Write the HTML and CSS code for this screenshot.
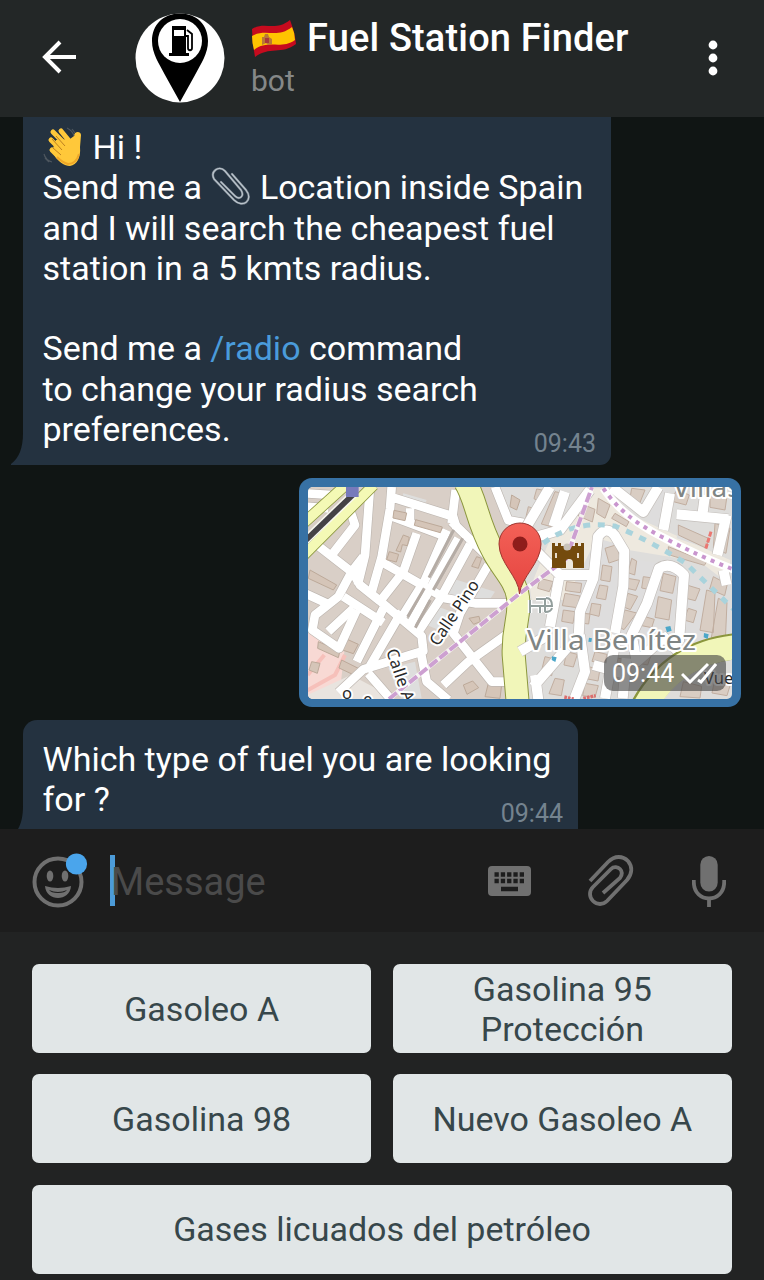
FILE: index.html
```html
<!DOCTYPE html>
<html lang="en">
<head>
<meta charset="utf-8">
<title>Fuel Station Finder</title>
<link rel="stylesheet" href="styles.css">
</head>
<body>
<div class="app">
  <header class="header">
    <svg class="back" viewBox="0 0 36 34" role="img" aria-label="Back"><path d="M34 17H4M18 2 3 17l15 15" fill="none" stroke="#fff" stroke-width="4"/></svg>
    <svg class="avatar" viewBox="0 0 90 90" role="img" aria-label="Fuel Station Finder avatar">
      <circle cx="45" cy="45" r="44.5" fill="#fff"/>
      <path d="M45 .5C28 .5 17 12 17 28c0 13 7 22 13 34l15 27 15-27c6-12 13-21 13-34C73 12 62 .5 45 .5Z" fill="#000"/>
      <circle cx="45" cy="28" r="22" fill="#fff"/>
      <path d="M37 13h14v27h3v3H34v-3h3Z" fill="#000"/>
      <path d="M39 17h10v6H39Z" fill="#fff"/>
      <path d="m52 17 5 4v14c0 3-4 3-4 0V23h-2" fill="none" stroke="#000" stroke-width="1.8"/>
    </svg>
    <div class="heading">
      <h1 class="title">
        <svg class="flag" viewBox="0 0 46 40" role="img" aria-label="Flag of Spain">
          <path d="M1 10C14 2 24 13 39 1q5 13 6 24C31 36 18 27 4 38Q1 24 1 10Z" fill="#c60b1e"/>
          <path d="M1 17C15 9 26 20 41 8q3 6 3 13C30 31 17 20 3 31Q1 24 1 17Z" fill="#ffc400"/>
          <path d="M11 18h2l1-3 3 0 1 3 3 2v5l-4 1-2-2-4 2Z" fill="#b97a35"/>
          <path d="M14 19h4v5h-4Z" fill="#a9393c"/>
        </svg>
        <span class="title-text">Fuel Station Finder</span>
      </h1>
      <p class="subtitle">bot</p>
    </div>
    <svg class="menu" viewBox="0 0 10 36" role="img" aria-label="Menu"><g fill="#fff"><circle cx="5" cy="5" r="4.400"/><circle cx="5" cy="18" r="4.400"/><circle cx="5" cy="31" r="4.400"/></g></svg>
  </header>

  <main class="chat">
    <section class="bubble intro">
      <svg class="tail" viewBox="0 0 13 32" aria-hidden="true"><path d="M13 0h-1C12 15 8 25 0 31v1h13Z" fill="#243240"/></svg>
      <p class="line"><svg class="emoji" viewBox="0 0 40 40" role="img" aria-label="Waving hand">
        <path d="M13 13 27 12l4-3c0-5 7-5 7-1l-1 12c1 10-3 18-10 19-6 0-10-4-14-8L9 24Z" fill="#ffc83a"/>
        <path d="m18 4 9 11M10 5l14 14M8 13l12 12M9 23l10 10" fill="none" stroke="#ffc83a" stroke-width="5" stroke-linecap="round"/>
        <path d="m13 9 9 10M9 12l10 11M10 21l8 7" fill="none" stroke="#bd8020" stroke-width="1"/>
        <path d="M36 27c-2 7-6 10-11 10-4-1-8-4-11-7" fill="none" stroke="#efa728" stroke-width="2"/>
        <path d="M1 27c1 4 4 7 8 8M2 31l4 4M24 1c4 2 6 4 7 8M29 2l3 4" fill="none" stroke="#4d565e" stroke-width="1.200"/>
      </svg><span>Hi !</span></p>
      <p class="line"><span>Send me a</span><svg class="emoji clip" viewBox="0 0 40 40" role="img" aria-label="Paperclip">
        <path d="m21 7 14 16c8 10-3 19-12 10L3 12C-1 4 8-2 14 4l16 19c4 7-2 10-6 6L10 15" fill="none" stroke="#77818b" stroke-width="2.300" stroke-linecap="round"/>
        <path d="m21 7 14 16c8 10-3 19-12 10L3 12C-1 4 8-2 14 4l16 19c4 7-2 10-6 6L10 15" fill="none" stroke="#bac4cc" stroke-width="1.200" stroke-linecap="round"/>
      </svg><span>Location inside Spain</span></p>
      <p class="line">and I will search the cheapest fuel</p>
      <p class="line">station in a 5 kmts radius.</p>
      <p class="line gap">Send me a <a class="command">/radio</a> command</p>
      <p class="line">to change your radius search</p>
      <p class="line">preferences.</p>
      <time class="time">09:43</time>
    </section>

    <section class="location">
      <svg class="map" viewBox="0 0 424 212" role="img" aria-label="Map of Villa Benítez">
        <defs>
          <linearGradient id="pin" x2="0" y2="1"><stop stop-color="#f36157"/><stop offset="1" stop-color="#e54440"/></linearGradient>
          <g id="west">
            <path d="m30 55 80 5M35 95l65 5M165 105l15 45-70 90M225 36l-15 205-22 90M60 205l105 82M205 245l-35 45-40 75-70 55-8 45 80 55 53-115M30 355l65 30"/>
            <path d="m290 36-5 65-25 145-30 105M285 65l185 58M285 122l155 58M482 45l-12 100M345 100v50M470 140l160 155 20 35M365 175l-40 115-75 95M250 255l200 115 90 15h110"/>
            <path d="m175 295 20 35 60 48 125 105 5 45-180 55-75 70M145 365l120 78M175 400l-75 70M265 400l-80 160M320 410l-105 180M455 165l-65 150-75 120M490 190 345 450M525 208l-90 165-70 105M580 270l-85 145-20 60 115 145h60M640 475l-120 85-75 70M375 520l20 100 65 55M220 595l65 75M600 36l40 100 60 10M470 110l15 50"/>
          </g>
          <g id="east">
            <path d="m190 500 5-90 40-100 14-125q25-35 50-4l29 48-3 105-25 140M340 500l56-115 36-105q35-23 75 20l-15 200"/>
            <path d="M20 180 105 36M65 185l70-20 90-120M150 50l-35 105M60 225l75 75h105M132 310l-27 145M290 36l95 75 45-75M465 55l-20 110M485 118l155 15M570 60l-8 60M635 120l-28 120M625 285l10 45M195 480l15 110-35 90M155 520 55 635M100 480l-85 50M60 600l10 75M305 480l-35 190M350 480l15 80 80-70M440 480l60 60M335 550l-12 120M235 570l90 25"/>
          </g>
        </defs>
        <rect width="424" height="212" fill="#dedddb"/>
        <g transform="translate(-13 -12) scale(.33333)" stroke-linejoin="round">
          <path d="M38 36h550l100 250v390H38Z" fill="#d9cfc7"/>
          <path d="m38 440 20 45 90 45-10 90-50 55H38Z" fill="#f8d9d4"/>
          <path d="m30 650 90-50 30-60M38 600l50-60" fill="none" stroke="#f6c0ba" stroke-width="12"/>
          <path d="m38 660 130-60 130 70v12H38Z" fill="#e9e4df"/>
          <path d="m325 55 70 20-10 25-70-20ZM415 390l55 20-25 60-50-20ZM470 310l130 40-20 30-120-10ZM280 580l80-20 20 110h-60Z" fill="#dededd"/>
          <g fill="#d5c5b8" stroke="#bca999" stroke-width="3">
            <path d="M70 500l65 28-5 20-62-28ZM50 560l25 5-8 30-25-10ZM150 490l40 18-15 28-36-12ZM140 555l60 30-8 22-60-28ZM580 625l40 5-5 40-45-5ZM505 630l28-12 18 20-35 20ZM45 285l80 45-10 15-75-35Z"/>
          </g>
          <use href="#west" fill="none" stroke="#beb7b1" stroke-width="30"/>
          <use href="#west" fill="none" stroke="#fff" stroke-width="26"/>
          <g fill="none" stroke="#b5aca5" stroke-width="9"><path d="M476 165 402 308M503 190 415 345M388 340l-50 85M406 375l-45 83"/></g>
          <g fill="#d5c5b8" stroke="#bca999" stroke-width="3">
            <path d="m297 106 38 8-5 23-36-8ZM362 134l80 22-6 17-78-22ZM325 180l18 7-6 25-15-3-5 22-14-4ZM283 230l28 8-7 23-29-7ZM545 245l15 5-10 30-20-6ZM522 430l30-6 4 16-20 8ZM650 60l25 15-10 30-20-10Z"/>
          </g>
          <path d="M25 145 150 32M25 242 236 30" stroke="#8c9740" stroke-width="34"/>
          <path d="M25 145 150 32M25 242 236 30" stroke="#f4f9b5" stroke-width="29"/>
          <path d="M30 198 183 50" stroke="#f8f8f0" stroke-width="26"/>
          <path d="M30 198 183 50" stroke="#444246" stroke-width="17"/>
          <path d="M153 30h38v36h-38Z" fill="#777abb"/>
          <path d="M510 20c35 55 35 120 85 210 25 50 67 85 74 137 8 65-16 82-13 173l13 155" fill="none" stroke="#8b963d" stroke-width="72"/>
          <path d="M510 20c35 55 35 120 85 210 25 50 67 85 74 137 8 65-16 82-13 173l13 155" fill="none" stroke="#f1f6b9" stroke-width="66"/>
        </g>
        <g transform="translate(207 -12) scale(.33333)" stroke-linejoin="round">
          <path d="m45 340 40-100 40-90 100-110h45l90 85 285 130v75l-90-70-215-35-10 75-15 75H50Z" fill="#eee9df"/>
          <path d="m245 190 75 20 20 40 90 15 140 45 80 70v135l-300 20H95l55-155Z" fill="#dedddd"/>
          <path d="m395 140 40-100h30l-20 120ZM490 150l90 30-5 40-90-30Z" fill="#dedddd"/>
          <g fill="#d9cdc3" stroke="#c1aea0" stroke-width="3">
            <path d="m65 42 28 5-16 34-20-10ZM40 95l35 12-20 32-24-4ZM120 50l24 5-35 100-30-8ZM195 85l45 18-8 38-42-18ZM250 70l35 20-15 40-25-15ZM300 115l42 25-8 15-44-25ZM350 40l40 5-18 45-28-15ZM485 45l38 15-10 30-45-12ZM585 65l50 5-5 35-45-8ZM490 150l90 40-5 30-85-40ZM600 145l45 15-12 75-38-15ZM460 215l75 30 45 8-12 18-108-32Z"/>
            <path d="m155 320 45 5-4 28-45-6ZM150 355l45 8-8 35-45-6ZM145 405l35 5-6 35-34-6ZM75 310l40 10-12 30-35-10ZM270 220l32-10 16 42-36 12ZM263 270l28 5-6 45-28-5ZM254 330l25 4-7 40-28-5ZM230 385l28 4-6 35-28-7ZM205 415l20 2-4 30-25-3ZM350 250l15 8-6 42-20-7ZM338 310l36 6-12 30-30-7ZM338 355l30 9-22 40-20-8ZM330 405l35 9-38 50-17-9ZM385 305l28 4-8 35-25-5ZM445 295l38 10-10 50-38-8ZM430 365l40 10-8 60-42-8ZM515 330l40 12-14 35-32-8ZM595 305l42 22-8 35-45-20ZM575 345l25 8-5 120-40-7ZM610 370l26 12-5 115-42-9ZM520 400l25 8-10 35-28-8ZM390 425l28 8-8 25-30-6Z"/>
            <path d="m90 545 28 7-8 50-32-8ZM120 610l28 5-9 47-37-6ZM155 530l32 8-12 38-28-6ZM240 530l36 8-7 28-38-7ZM220 575l35 8-6 35-36-7ZM210 625l40 7-10 35-37-5ZM355 520l55 15-12 35-52-10ZM290 545l40 9-8 35-38-8ZM505 620l55 14-5 35-60-4ZM600 610l48 12-12 40-45-8Z"/>
          </g>
          <use href="#east" fill="none" stroke="#c4bfbb" stroke-width="34"/>
          <use href="#east" fill="none" stroke="#fff" stroke-width="30"/>
          <path d="M382 700Q475 525 680 512" fill="none" stroke="#8b963d" stroke-width="78"/><path d="M382 700Q475 525 680 512" fill="none" stroke="#f1f6b9" stroke-width="72" transform="translate(3 3)"/>
          <path d="M85 205q90-70 215-52 100 42 210 110 75 72 145 139" fill="none" stroke="#a9d3dc" stroke-width="15" stroke-dasharray="21 23"/>
          <path d="M265 40q60 90 185 150 110 57 210 95" fill="none" stroke="#fff" stroke-width="24"/>
          <path d="M265 40q60 90 185 150 110 57 210 95" fill="none" stroke="#c995ce" stroke-width="12" stroke-dasharray="12 16"/>
          <path d="m588 170-16 52" stroke="#eb7771" stroke-width="9" stroke-dasharray="15 4"/>
          <path d="m148 666 28 6M205 670l37-8" stroke="#dc6d6d" stroke-width="10" stroke-dasharray="8 3"/>
          <g fill="#4ca7c9"><path d="m451 456 15-3 4 14-14 5ZM567 474l14 4-3 14-12-5ZM111 544l14 3-4 14-11-6ZM222 488l9 2-2 11-9-1Z"/></g>
        </g>
        <path d="M81 212 211 107 258 72 284 0" fill="none" stroke="#fff" stroke-opacity=".75" stroke-width="5"/>
        <path d="M81 212 211 107 258 72 284 0" fill="none" stroke="#cda0d1" stroke-width="4" stroke-dasharray="10 3"/>
        <path d="M222 113v13M222 119h10v7M228 112h9v13M232 119h12q0-8-6-8M237 125q6 0 7-4" fill="none" stroke="#fff" stroke-width="4.500"/>
        <path d="M222 113v13M222 119h10v7M228 112h9v13M232 119h12q0-8-6-8M237 125q6 0 7-4" fill="none" stroke="#929e9c" stroke-width="2"/>
        <path d="M244 56h3v3h3v-3h3v3h3l2 4h4l2-4h3v-3h3v3h3v-3h3v25h-11v-5q0-4-4-4t-3 4v5h-14Z" fill="#744b0d"/>
        <path d="M248 66v5M270 66v5" stroke="#e8dccb" stroke-width="2"/>
        <circle cx="259" cy="60" r="3.500" fill="#c9c3bb"/>
        <text class="map-text street" transform="translate(130 160) rotate(-56)" textLength="75">Calle Pino</text>
        <text class="map-text street" transform="translate(78 164) rotate(71)" textLength="55">Calle A</text>
        <text class="map-text street" x="34" y="212">o</text>
        <text class="map-text street" x="55" y="218">e</text>
        <text class="map-text place" x="219" y="163" textLength="169" lengthAdjust="spacingAndGlyphs">Villa Benítez</text>
        <text class="map-text place" x="365" y="10">Villas</text>
        <text class="map-text street" x="396" y="197">Vue</text>
        <path d="M211.500 107C211 90 191 76 191 57a21 21 0 0 1 42 0c0 19-20 33-21.500 50Z" fill="url(#pin)" stroke="#9e352f"/>
        <circle cx="212" cy="57" r="7.500" fill="#8e1d1b"/>
      </svg>
      <div class="stamp"><time>09:44</time><svg class="checks" viewBox="0 0 36 22" role="img" aria-label="Read"><path d="m1 12 8 8L27 2M17 18l3 2L35 2" fill="none" stroke="#fff" stroke-width="3"/></svg></div>
    </section>

    <section class="bubble question">
      <svg class="tail low" viewBox="0 0 13 32" aria-hidden="true"><path d="M13 0h-1C12 15 8 25 0 31v1h13Z" fill="#243240"/></svg>
      <p class="line">Which type of fuel you are looking</p>
      <p class="line">for ?</p>
      <time class="time">09:44</time>
    </section>
  </main>

  <section class="composer">
    <svg class="smile" viewBox="0 0 56 56" role="img" aria-label="Emoji">
      <circle cx="26" cy="30" r="23.500" fill="none" stroke="#707070" stroke-width="4"/>
      <ellipse cx="18" cy="24" rx="3.300" ry="5.500" fill="#707070"/><ellipse cx="33" cy="24" rx="3.300" ry="5.500" fill="#707070"/>
      <path d="M13 34q13 4 26 0c-1 16-25 16-26 0Z" fill="#707070"/><path d="M17 38q9 4 18 0-2 3-9 3t-9-3Z" fill="#1d1d1d"/>
      <circle cx="44.500" cy="12" r="10.600" fill="#4aa5ec"/>
    </svg>
    <div class="input"><span class="caret"></span><span class="placeholder">Message</span></div>
    <svg class="keys" viewBox="0 0 44 30" role="img" aria-label="Keyboard"><rect width="43" height="30" rx="4" fill="#707070"/><path d="M6.500 8.500h31M6.500 15h31" stroke="#1d1d1d" stroke-width="4.300" stroke-dasharray="4.300 2"/><path d="M13 23h17" stroke="#1d1d1d" stroke-width="4.500"/></svg>
    <svg class="attach" viewBox="0 0 46 52" role="img" aria-label="Attach"><path d="M2 26 20 7c7-7 15-6 20-1 5 6 4 13-1 19L19 46c-4 4-10 4-14 0s-4-10 0-14l18-18c3-3 7-2 9 0 3 3 2 6 0 9L15 38" fill="none" stroke="#707070" stroke-width="3.800"/></svg>
    <svg class="mic" viewBox="0 0 34 52" role="img" aria-label="Voice message"><rect x="8.300" width="17.400" height="35.500" rx="8.700" fill="#707070"/><path d="M1.800 24v2c0 22 30.400 22 30.400 0v-2M17 42v9" fill="none" stroke="#707070" stroke-width="3.800"/></svg>
  </section>

  <section class="keyboard">
    <button class="choice">Gasoleo A</button>
    <button class="choice">Gasolina 95<br>Protección</button>
    <button class="choice">Gasolina 98</button>
    <button class="choice">Nuevo Gasoleo A</button>
    <button class="choice wide">Gases licuados del petróleo</button>
  </section>
</div>
</body>
</html>
```
FILE: styles.css
```css
* { box-sizing: border-box; }
body { margin: 0; background: #222323; font-family: Roboto, "Noto Sans", sans-serif; }
h1, p { margin: 0; }
svg { display: block; flex: none; }
.app { width: 764px; height: 1280px; overflow: hidden; display: flex; flex-direction: column; }

.header { height: 117px; flex: none; display: flex; align-items: flex-start; background: #232727; padding: 13px 46px 0 42px; }
.back { width: 36px; height: 34px; margin-top: 27px; }
.avatar { width: 90px; height: 90px; margin-left: 57px; }
.heading { margin-left: 26px; flex: 1; }
.title { display: flex; gap: 10px; align-items: center; height: 50px; color: #fff; font-size: 38px; font-weight: 500; line-height: 50px; letter-spacing: .15px; white-space: nowrap; }
.flag { width: 46px; height: 40px; margin-top: 1px; }
.subtitle { color: #858888; font-size: 30px; line-height: 36px; }
.menu { width: 10px; height: 36px; margin-top: 27px; }

.chat { height: 712px; flex: none; overflow: hidden; background: #101514; padding: 0 23px; display: flex; flex-direction: column; align-items: flex-start; }
.bubble { position: relative; flex: none; background: #243240; color: #fff; font-size: 34px; line-height: 40.300px; padding-left: 19.500px; }
.intro { width: 588px; height: 348px; border-radius: 0 0 11px 0; padding-top: 10px; }
.question { width: 555px; height: 118px; margin-top: 13px; border-radius: 14px 14px 10px 0; padding-top: 19px; }
.line { display: flex; white-space: pre; height: 40.300px; }
.line.gap { margin-top: 40.300px; }
.emoji { width: 40px; height: 40px; margin-right: 10px; }
.clip { margin: 0 9px; }
.command { color: #4a9bdb; }
.time { position: absolute; right: 15px; bottom: 6px; color: #74838f; font-size: 25px; line-height: 30px; }
.question .time { bottom: 9px; }
.tail { position: absolute; left: -12px; bottom: 0; width: 13px; height: 32px; }
.tail.low { bottom: 0; }

.location { position: relative; flex: none; align-self: flex-end; margin-top: 13px; width: 442px; height: 229px; padding: 9px; border-radius: 13px; background: #3771a4; }
.map { width: 424px; height: 212px; border-radius: 5px; }
.map-text { font-family: "Noto Sans", sans-serif; paint-order: stroke; stroke: #fff; stroke-width: 4px; stroke-linejoin: round; }
.street { font-size: 16.500px; fill: #292929; }
.place { font-size: 28px; fill: #7f8584; }
.stamp { position: absolute; right: 15px; bottom: 16px; width: 122px; height: 36px; border-radius: 9px; background: rgba(70, 70, 70, .62); display: flex; align-items: center; gap: 7px; padding-left: 8px; color: #fff; font-size: 25px; }
.checks { width: 36px; height: 22px; }

.composer { height: 103px; flex: none; background: #1d1d1d; display: flex; align-items: center; padding: 0 37px 0 32px; }
.smile { width: 56px; height: 56px; margin-top: -2px; }
.input { display: flex; align-items: center; width: 378px; margin-left: 22px; color: #4a4a4a; font-size: 38px; }
.placeholder { margin-top: 3px; }
.caret { width: 5px; height: 51px; background: #4c9bd8; margin-right: -4px; }
.keys { width: 44px; height: 30px; }
.attach { width: 46px; height: 52px; margin-left: 56px; }
.mic { width: 34px; height: 52px; margin: 2px 1px 0 auto; }

.keyboard { flex: 1; background: #222323; display: grid; grid-template-columns: 1fr 1fr; grid-auto-rows: 89px; gap: 21.400px; padding: 32px 32px 0; }
.choice { border: 0; border-radius: 7px; padding: 0; background: #e1e6e7; color: #37474b; font: 400 34px/40px Roboto, "Noto Sans", sans-serif; }
.wide { grid-column: 1 / -1; }
```
